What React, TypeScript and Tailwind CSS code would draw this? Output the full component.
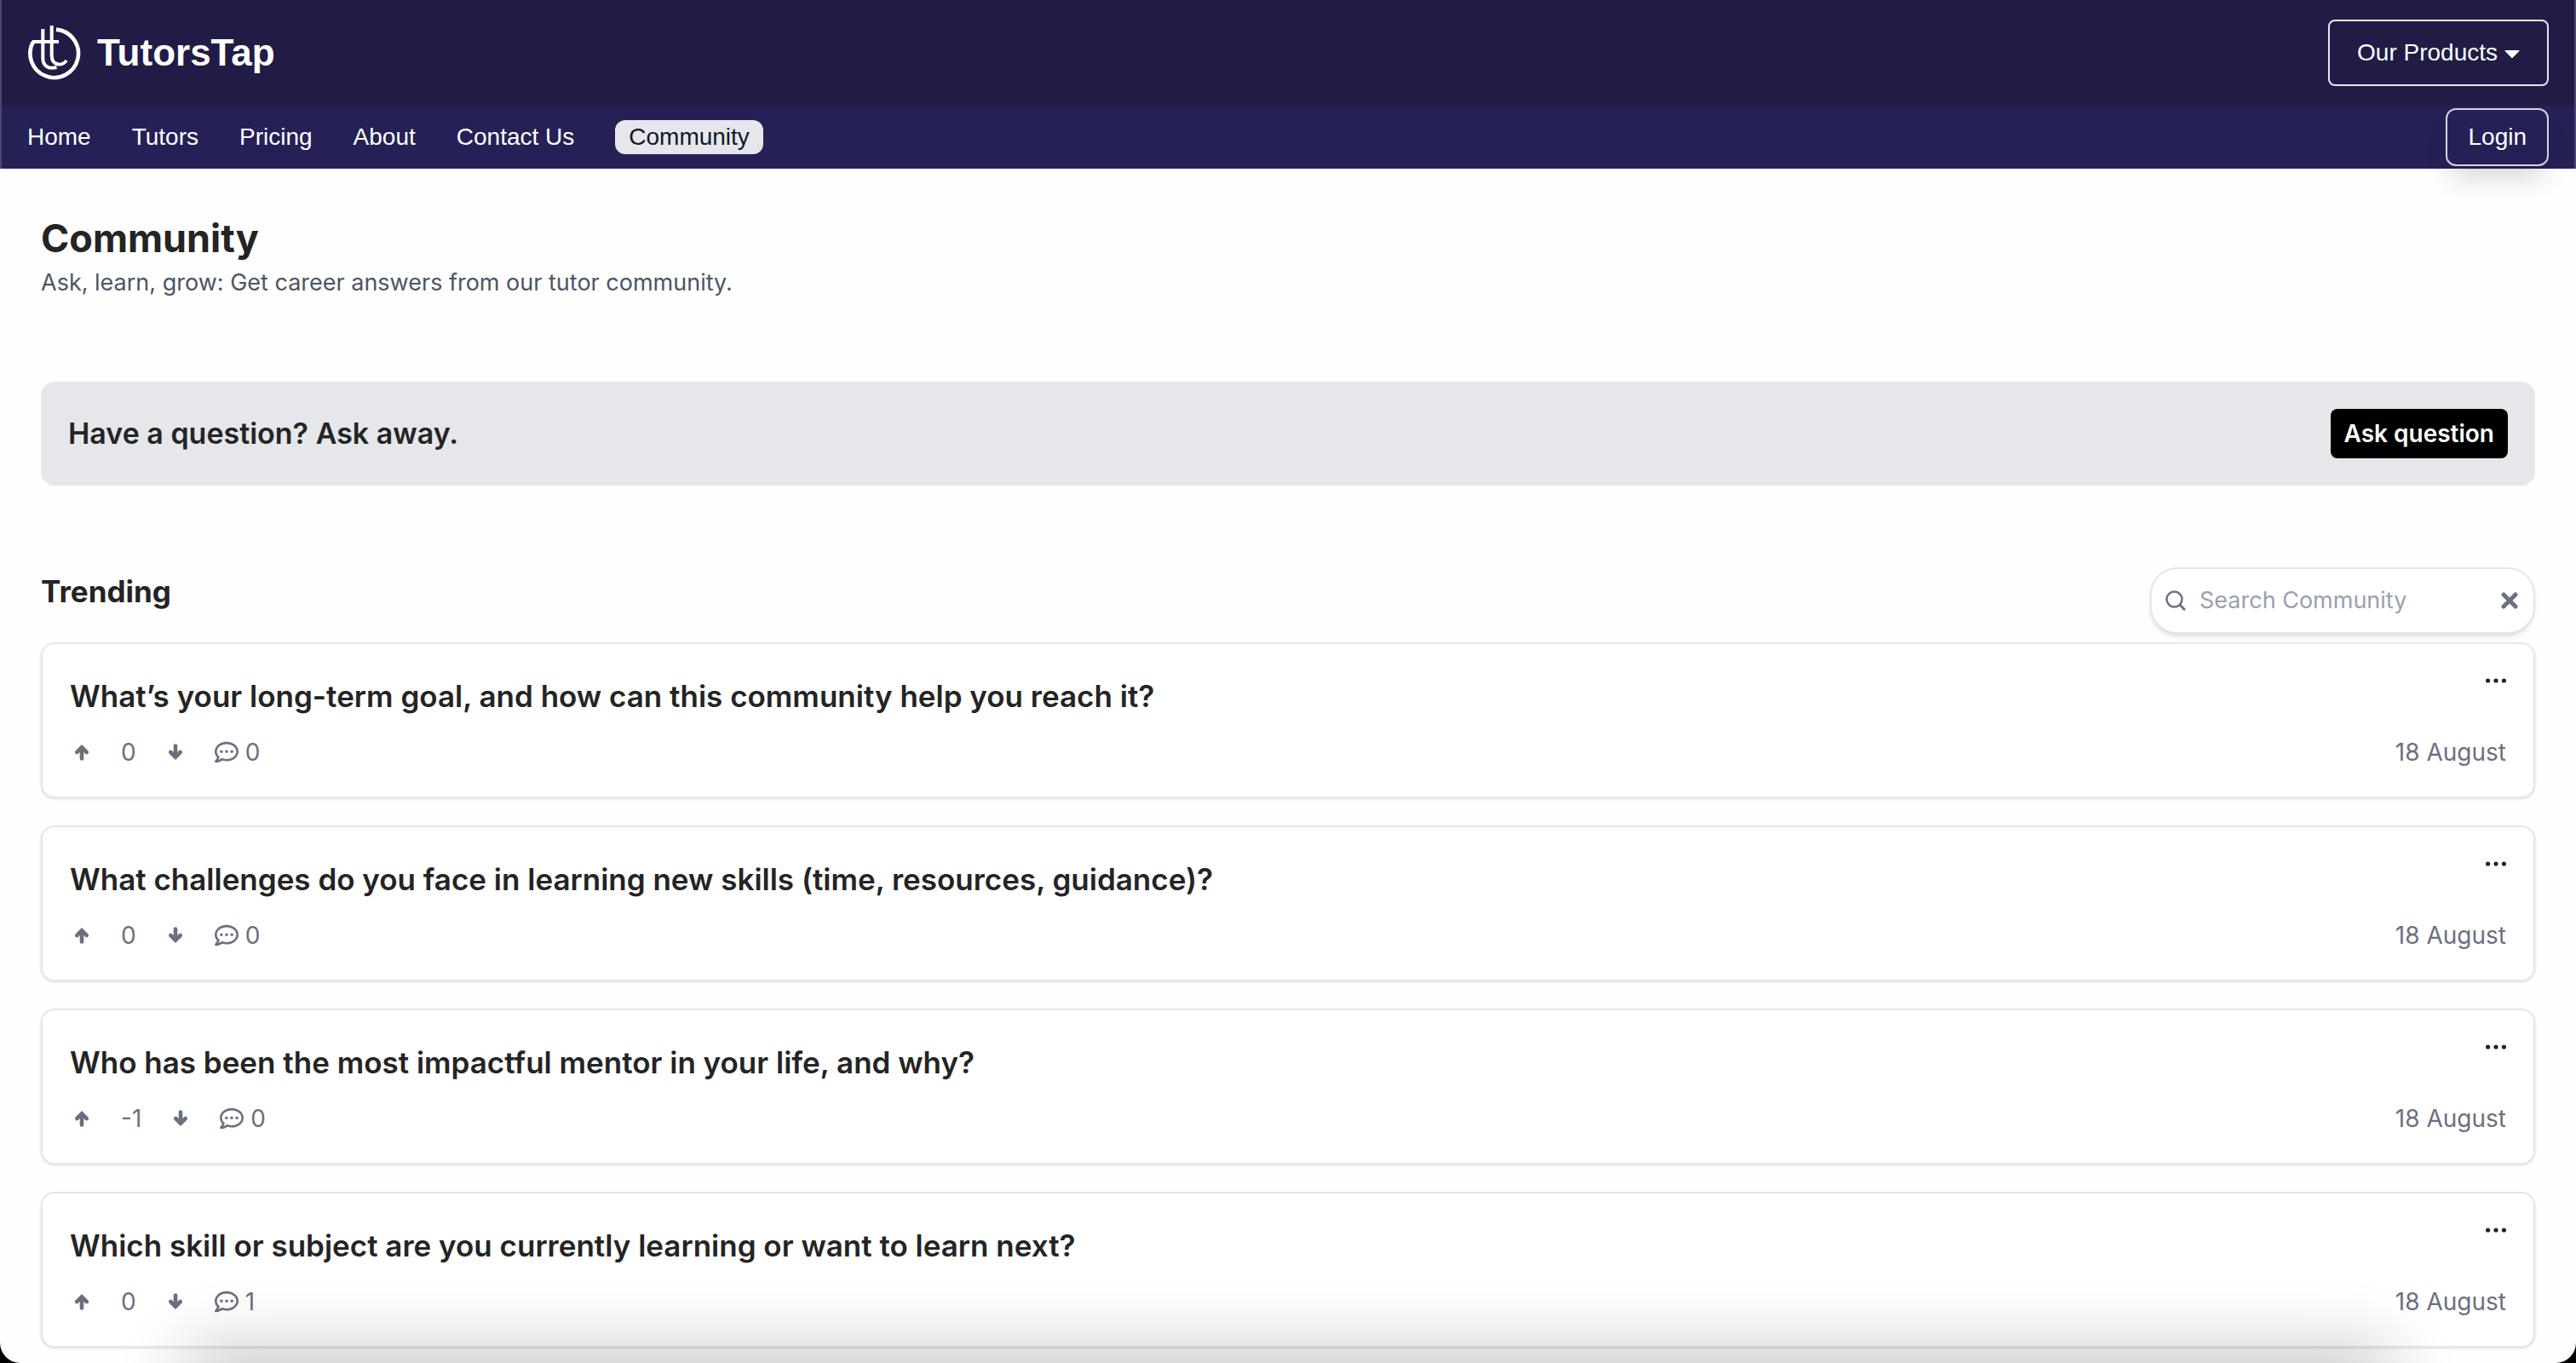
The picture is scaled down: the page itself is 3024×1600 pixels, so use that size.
import { useState } from "react";
import { FaRegCommentDots } from "react-icons/fa";

const navLinks = [
  { label: "Home", href: "#home" },
  { label: "Tutors", href: "#tutors" },
  { label: "Pricing", href: "#pricing" },
  { label: "About", href: "#about" },
  { label: "Contact Us", href: "#contact" },
  { label: "Community", href: "#community", active: true },
];

const questions = [
  {
    id: 1,
    title: "What’s your long-term goal, and how can this community help you reach it?",
    votes: 0,
    comments: 0,
    date: "18 August",
  },
  {
    id: 2,
    title: "What challenges do you face in learning new skills (time, resources, guidance)?",
    votes: 0,
    comments: 0,
    date: "18 August",
  },
  {
    id: 3,
    title: "Who has been the most impactful mentor in your life, and why?",
    votes: -1,
    comments: 0,
    date: "18 August",
  },
  {
    id: 4,
    title: "Which skill or subject are you currently learning or want to learn next?",
    votes: 0,
    comments: 1,
    date: "18 August",
  },
];

function Logo() {
  return (
    <svg viewBox="0 0 64 64" className="size-16" fill="none" stroke="white" aria-hidden="true">
      <path d="M34 4.600A28.300 28.300 0 1 1 7 19" strokeWidth="4.600" />
      <path d="M6 19H37" strokeWidth="4" />
      <path d="M18.300 4V38C18.300 47 24 51.500 34.500 49" strokeWidth="4" />
      <path d="M28.700 0V35C28.700 47 41 48.500 46 41" strokeWidth="4" />
    </svg>
  );
}

function VoteArrow({ className }: { className?: string }) {
  return (
    <svg
      viewBox="0 0 28 28"
      className={className}
      fill="none"
      stroke="currentColor"
      strokeWidth="4.600"
      strokeLinecap="round"
      aria-hidden="true"
    >
      <path d="M14 21.500V9" />
      <path d="M8.300 14L14 8.300L19.700 14" />
    </svg>
  );
}

function Header() {
  return (
    <header className="border-x-2 border-white/20 bg-[#201c46] font-['Liberation_Sans',sans-serif] text-[28px] text-white">
      <div className="flex h-31 items-center justify-between px-[30px]">
        <a href="#home" className="flex items-center gap-[18px] text-[44px] font-bold">
          <Logo />
          TutorsTap
        </a>
        <button className="flex h-[78px] items-center gap-2 rounded-lg border-2 border-gray-200 px-8">
          Our Products
          <svg viewBox="0 0 18 10" className="mt-1 h-[10px] w-[18px]" fill="currentColor" aria-hidden="true">
            <path d="M1 0H17Q18 0 17.300 1L10 8.500Q9 9.500 8 8.500L.7 1Q0 0 1 0Z" />
          </svg>
        </button>
      </div>
      <nav className="flex h-[74px] items-center justify-between bg-[#252156] px-[30px]">
        <ul className="flex items-center gap-12">
          {navLinks.map((link) => (
            <li key={link.href}>
              <a
                href={link.href}
                className={
                  link.active
                    ? "block rounded-xl bg-gray-200 px-4 leading-10 text-gray-900"
                    : "block leading-10"
                }
              >
                {link.label}
              </a>
            </li>
          ))}
        </ul>
        <button className="h-[68px] rounded-xl border-2 border-gray-300 px-6 shadow-[0_20px_30px_-6px_rgba(0,0,0,0.15)]">
          Login
        </button>
      </nav>
    </header>
  );
}

function SearchBox() {
  const [query, setQuery] = useState("");

  return (
    <div className="flex h-[78px] w-[452px] items-center rounded-[32px] border-2 border-gray-200 bg-white px-4 text-gray-500 shadow-md">
      <svg viewBox="0 0 24 24" className="size-6 shrink-0" fill="none" stroke="currentColor" strokeWidth="2.500" aria-hidden="true">
        <circle cx="10.500" cy="10.500" r="9" />
        <path d="M17 17L23 23" strokeWidth="3" />
      </svg>
      <input
        type="text"
        aria-label="Search Community"
        placeholder="Search Community"
        value={query}
        onChange={(e) => setQuery(e.target.value)}
        className="mx-4 min-w-0 flex-1 text-[27px] text-gray-900 outline-none placeholder:text-gray-400"
      />
      <button aria-label="Clear search" onClick={() => setQuery("")} className="pr-0.5">
        <svg
          viewBox="0 0 20 20"
          className="size-5"
          fill="none"
          stroke="currentColor"
          strokeWidth="5"
          strokeLinecap="round"
          aria-hidden="true"
        >
          <path d="M3 3L17 17M17 3L3 17" />
        </svg>
      </button>
    </div>
  );
}

function QuestionCard({ question }: { question: (typeof questions)[number] }) {
  const [votes, setVotes] = useState(question.votes);

  return (
    <li className="rounded-2xl border-2 border-gray-200 bg-white p-8 shadow-sm">
      <div className="flex items-start justify-between">
        <h3 className="text-[35px] leading-[59px] font-semibold">{question.title}</h3>
        <button aria-label="More options" className="flex h-[22px] items-center">
          <svg viewBox="0 0 24 6" className="h-[6px] w-6" fill="currentColor" aria-hidden="true">
            <circle cx="2.600" cy="3" r="2.600" />
            <circle cx="12" cy="3" r="2.600" />
            <circle cx="21.400" cy="3" r="2.600" />
          </svg>
        </button>
      </div>
      <div className="mt-4 flex h-10 items-center justify-between text-[#6b7080]">
        <div className="flex items-center">
          <button aria-label="Upvote" onClick={() => setVotes(votes + 1)}>
            <VoteArrow className="size-7" />
          </button>
          <span className="mx-8">{votes}</span>
          <button aria-label="Downvote" onClick={() => setVotes(votes - 1)}>
            <VoteArrow className="size-7 rotate-180" />
          </button>
          <a href="#comments" className="ml-8 flex items-center gap-2">
            <FaRegCommentDots size={28} />
            {question.comments}
          </a>
        </div>
        <time>{question.date}</time>
      </div>
    </li>
  );
}

export default function App() {
  return (
    <div className="relative h-screen overflow-hidden bg-black">
      <div className="h-full overflow-hidden rounded-b-[24px] bg-[#fefefe] font-[Inter,sans-serif] text-[28px] leading-10 text-[#242424]">
        <Header />
        <main className="px-12 pt-[50px] pb-12">
          <h1 className="text-[45px] leading-16 font-bold">Community</h1>
          <p className="text-[27px] text-gray-600">
            Ask, learn, grow: Get career answers from our tutor community.
          </p>

          <section className="mt-24 flex items-center justify-between rounded-2xl bg-gray-200 p-8">
            <h2 className="text-[34px] font-semibold">Have a question? Ask away.</h2>
            <button className="h-[58px] rounded-lg bg-black px-4 font-semibold text-white">
              Ask question
            </button>
          </section>

          <section className="mt-24">
            <div className="flex items-start justify-between">
              <h2 className="text-[35px] leading-14 font-bold">Trending</h2>
              <SearchBox />
            </div>
            <ul className="mt-[10px] space-y-8">
              {questions.map((q) => (
                <QuestionCard key={q.id} question={q} />
              ))}
            </ul>
          </section>
        </main>
      </div>
      {/* soft shade along the bottom edge */}
      <div className="pointer-events-none absolute inset-x-60 -bottom-10 h-8 rounded-full shadow-[0_0_80px_30px_rgba(0,0,0,0.2)]" />
    </div>
  );
}
